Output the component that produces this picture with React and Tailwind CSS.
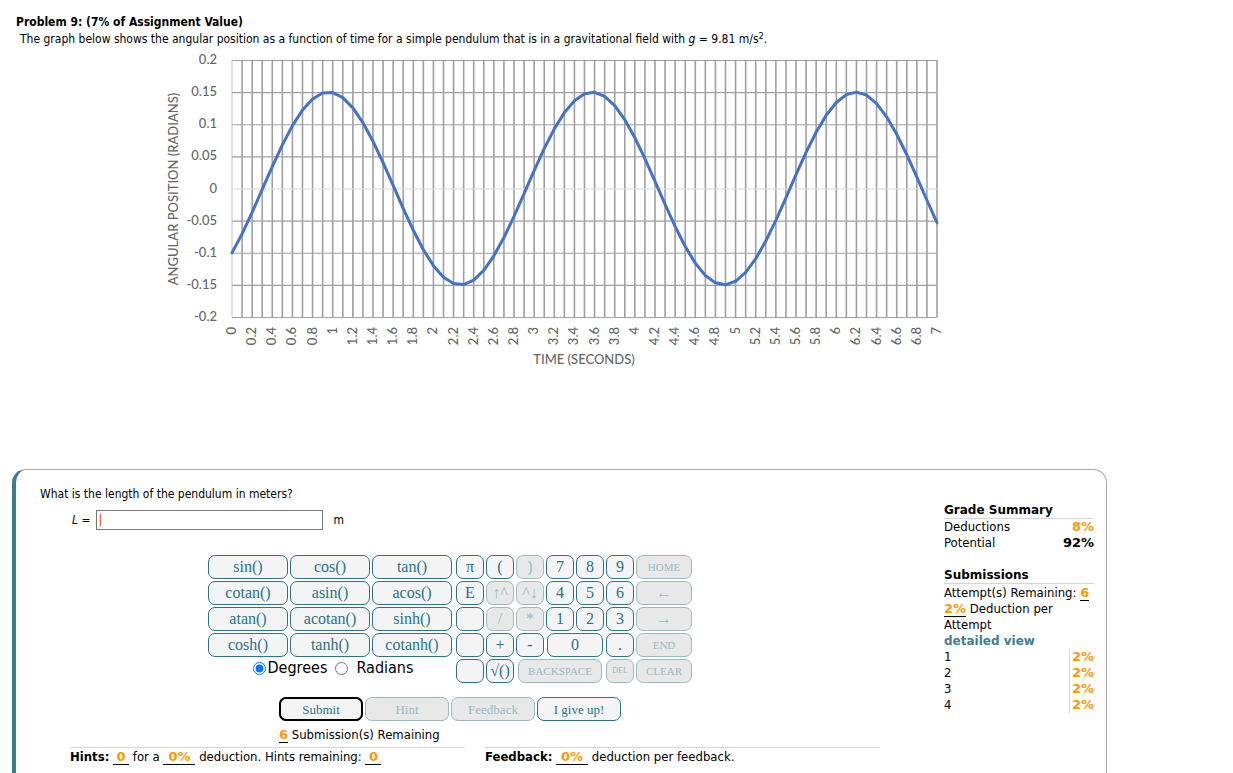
import { useState } from "react";

const PLOT = { left: 67, right: 772, top: 10, bottom: 267 };
const AMPLITUDE = 0.15;
const OMEGA = 2.4;
const PHASE = -0.73;

const xOf = (t) => PLOT.left + ((PLOT.right - PLOT.left) * t) / 7;
const yOf = (v) => PLOT.top + ((PLOT.bottom - PLOT.top) * (0.2 - v)) / 0.4;

const times = Array.from({ length: 71 }, (_, i) => i / 10);
const labelTimes = times.filter((_, i) => i % 2 === 0);
const angles = [0.2, 0.15, 0.1, 0.05, 0, -0.05, -0.1, -0.15, -0.2];

const curve = times
  .map((t) => `${xOf(t)},${yOf(AMPLITUDE * Math.sin(OMEGA * t + PHASE))}`)
  .join(" ");

const functions = [
  "sin()", "cos()", "tan()",
  "cotan()", "asin()", "acos()",
  "atan()", "acotan()", "sinh()",
  "cosh()", "tanh()", "cotanh()",
];

const keys = [
  { label: "π" },
  { label: "(" },
  { label: ")", off: true },
  { label: "7" },
  { label: "8" },
  { label: "9" },
  { label: "HOME", off: true, size: "text-[11px]" },
  { label: "E" },
  { label: "↑^", off: true },
  { label: "^↓", off: true },
  { label: "4" },
  { label: "5" },
  { label: "6" },
  { label: "←", off: true },
  { label: "" },
  { label: "/", off: true },
  { label: "*", off: true },
  { label: "1" },
  { label: "2" },
  { label: "3" },
  { label: "→", off: true },
  { label: "" },
  { label: "+" },
  { label: "-" },
  { label: "0", span: "col-span-2 mx-px" },
  { label: "." },
  { label: "END", off: true, size: "text-[11px]" },
  { label: "" },
  { label: "√()" },
  { label: "BACKSPACE", off: true, size: "text-[11px]", span: "col-span-3 mx-0.5" },
  { label: "DEL", off: true, size: "text-[8px]" },
  { label: "CLEAR", off: true, size: "text-[11px]" },
];

function PadButton({ label, off, size = "text-base", className = "", ...rest }) {
  const tone = off
    ? "border-[#98bac3] bg-[#e8e8e8] text-[#98bac3]"
    : "border-[#2b7385] bg-[#f4f4f4] text-[#2b7385]";
  return (
    <button
      type="button"
      disabled={off}
      className={`flex h-6 items-center justify-center rounded-[7px] border font-['Liberation_Serif',serif] leading-none whitespace-nowrap ${tone} ${size} ${className}`}
      {...rest}
    >
      {label}
    </button>
  );
}

function Mark({ children, className = "" }) {
  return (
    <span
      className={`inline-block h-4 border-b border-black text-center font-['DejaVu_Sans',sans-serif] font-bold text-[#ff9900] ${className}`}
    >
      {children}
    </span>
  );
}

function PendulumChart() {
  return (
    <svg
      viewBox="0 0 785 320"
      className="ml-[149px] block h-[320px] w-[785px] font-['Lato',sans-serif] font-medium"
      role="img"
      aria-label="Angular position against time"
    >
      {times.map((t) => (
        <line
          key={t}
          x1={xOf(t)}
          x2={xOf(t)}
          y1={PLOT.top}
          y2={PLOT.bottom}
          stroke={t === 0 ? "#d9d9d9" : "#a0a0a0"}
          strokeWidth="1.6"
        />
      ))}
      {angles.map((a) => (
        <g key={a}>
          <line
            x1={PLOT.left}
            x2={PLOT.right}
            y1={yOf(a) + 0.5}
            y2={yOf(a) + 0.5}
            stroke={a === 0 ? "#d9d9d9" : "#a0a0a0"}
            strokeWidth="1.2"
          />
          <text x="52" y={yOf(a) + 4} textAnchor="end" fontSize="13" fill="#666666">
            {a}
          </text>
        </g>
      ))}
      <polyline
        points={curve}
        fill="none"
        stroke="#4472c4"
        strokeWidth="3"
        strokeLinejoin="round"
        strokeLinecap="round"
      />
      {labelTimes.map((t) => (
        <text
          key={t}
          transform={`translate(${xOf(t) + 4} 277) rotate(-90)`}
          textAnchor="end"
          fontSize="13"
          fill="#666666"
        >
          {t}
        </text>
      ))}
      <text x="419" y="314" textAnchor="middle" fontSize="13" fill="#666666">
        TIME (SECONDS)
      </text>
      <text
        transform="translate(13 139) rotate(-90)"
        textAnchor="middle"
        fontSize="13"
        fill="#666666"
      >
        ANGULAR POSITION (RADIANS)
      </text>
    </svg>
  );
}

function Calculator({ onKey }) {
  const [unit, setUnit] = useState("degrees");

  return (
    <div className="mt-[25px] flex justify-center gap-1">
      <div>
        <div className="grid grid-cols-[repeat(3,80px)] gap-0.5">
          {functions.map((f) => (
            <PadButton key={f} label={f} onClick={() => onKey(f)} />
          ))}
        </div>
        <div className="flex justify-center gap-2 pt-px pl-1.5 text-base leading-5">
          <label className="flex items-center gap-0.5">
            <input
              type="radio"
              name="unit"
              className="size-[13px] accent-[#0075ff]"
              checked={unit === "degrees"}
              onChange={() => setUnit("degrees")}
            />
            Degrees
          </label>
          <label className="flex items-center gap-2">
            <input
              type="radio"
              name="unit"
              className="size-[13px] accent-[#0075ff]"
              checked={unit === "radians"}
              onChange={() => setUnit("radians")}
            />
            Radians
          </label>
        </div>
      </div>
      <div className="grid grid-cols-[repeat(6,28px)_56px] content-start gap-0.5">
        {keys.map((k, i) => (
          <PadButton
            key={i}
            label={k.label}
            off={k.off}
            size={k.size}
            className={k.span}
            onClick={() => onKey(k.label)}
          />
        ))}
      </div>
    </div>
  );
}

function GradeSummary() {
  return (
    <aside className="mt-8 mr-3 w-[150px] shrink-0 text-[13px] leading-4">
      <h2 className="border-b border-gray-300 font-['DejaVu_Sans',sans-serif] text-xs leading-4 font-bold">
        Grade Summary
      </h2>
      <table className="w-full">
        <tbody>
          <tr>
            <th scope="row" className="p-0 text-left font-normal">Deductions</th>
            <td className="p-0 text-right font-['DejaVu_Sans',sans-serif] font-bold text-[#ff9900]">8%</td>
          </tr>
          <tr>
            <th scope="row" className="p-0 text-left font-normal">Potential</th>
            <td className="p-0 text-right font-['DejaVu_Sans',sans-serif] font-bold">92%</td>
          </tr>
        </tbody>
      </table>
      <h2 className="mt-4 mb-px border-b border-gray-300 font-['DejaVu_Sans',sans-serif] text-xs leading-4 font-bold">
        Submissions
      </h2>
      <p className="whitespace-nowrap">
        Attempt(s) Remaining: <Mark>6</Mark>
      </p>
      <p>
        <Mark>2%</Mark> Deduction per
        <br />
        Attempt
      </p>
      <a
        href="#details"
        className="block font-['DejaVu_Sans',sans-serif] text-xs leading-4 font-bold text-[#3d7e8e]"
      >
        detailed view
      </a>
      <table className="w-full border-collapse">
        <tbody>
          {[1, 2, 3, 4].map((n) => (
            <tr key={n}>
              <td className="p-0">{n}</td>
              <td className="w-[25px] border-l border-gray-300 p-0 text-right font-['DejaVu_Sans',sans-serif] font-bold text-[#ff9900]">
                2%
              </td>
            </tr>
          ))}
        </tbody>
      </table>
    </aside>
  );
}

export default function App() {
  const [answer, setAnswer] = useState("");

  return (
    <main className="flex h-screen flex-col overflow-hidden bg-white pt-[14px] font-['DejaVu_Sans_Condensed','Noto_Sans',sans-serif] text-xs leading-4 text-black">
      {/* Problem statement */}
      <header className="px-4">
        <h1 className="font-bold">Problem 9: (7% of Assignment Value)</h1>
        <p className="mt-px ml-1">
          The graph below shows the angular position as a function of time for a
          simple pendulum that is in a gravitational field with <i>g</i> = 9.81
          m/s<sup>2</sup>.
        </p>
        <div className="mt-[3px]">
          <PendulumChart />
        </div>
      </header>

      {/* Answer panel */}
      <section className="mt-[99px] mr-[126px] ml-3 flex flex-1 items-start rounded-t-[14px] border border-b-0 border-l-4 border-[#a8a8a8] border-l-[#3b7d8d]">
        <div className="mt-4 mr-16 ml-1 min-w-0 flex-1">
          <p className="ml-5">What is the length of the pendulum in meters?</p>
          <div className="mt-2 ml-[52px] flex items-center">
            <label htmlFor="answer" className="mr-[5px]">
              <i>L</i> =
            </label>
            <input
              id="answer"
              type="text"
              placeholder="|"
              value={answer}
              onChange={(e) => setAnswer(e.target.value)}
              className="h-5 w-[227px] border border-[#767676] px-0.5 caret-[#ff5a00] outline-none placeholder:font-bold placeholder:text-[#ff5a00]"
            />
            <span className="ml-[11px]">m</span>
          </div>

          <Calculator onKey={(k) => setAnswer((prev) => prev + k)} />

          <div className="mt-3.5 flex justify-center">
            <div>
              <div className="grid grid-cols-[repeat(4,84px)] gap-0.5">
                <PadButton
                  label="Submit"
                  size="text-[13px]"
                  className="outline-2 -outline-offset-2 outline-black"
                />
                <PadButton label="Hint" size="text-[13px]" off />
                <PadButton label="Feedback" size="text-[13px]" off />
                <PadButton label="I give up!" size="text-[13px]" />
              </div>
              <p className="mt-1.5 text-[13px] leading-4">
                <Mark>6</Mark> Submission(s) Remaining
              </p>
            </div>
          </div>

          <div className="mt-1 ml-[50px] grid grid-cols-2 gap-5 text-[13px] leading-4">
            <p className="border-t border-gray-300 pt-px">
              <b>Hints:</b> <Mark className="w-4">0</Mark> for a{" "}
              <Mark className="w-8">0%</Mark> deduction. Hints remaining:{" "}
              <Mark className="w-4">0</Mark>
            </p>
            <p className="border-t border-gray-300 pt-px">
              <b>Feedback:</b> <Mark className="w-8">0%</Mark> deduction per
              feedback.
            </p>
          </div>
        </div>
        <GradeSummary />
      </section>
    </main>
  );
}
